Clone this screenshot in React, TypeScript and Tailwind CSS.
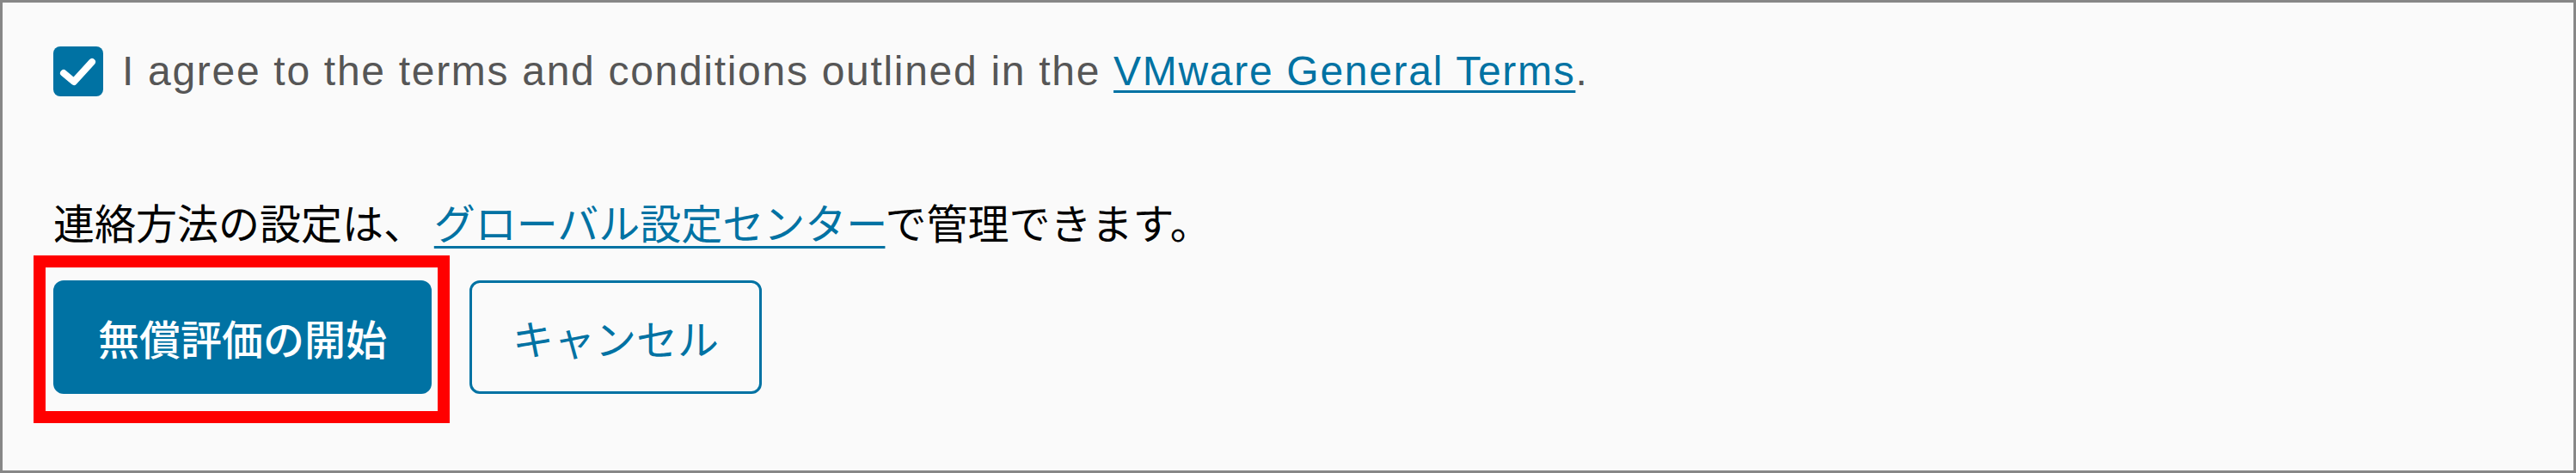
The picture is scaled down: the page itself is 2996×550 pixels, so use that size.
import React from "react";

export default function App() {
  return (
    <div className="w-[2996px] h-[550px] box-border border-[3px] border-[#878787] bg-[#fafafa] pl-[59px]">
      <div className="flex items-center gap-[22px] mt-[51px] h-[58px]">
        <div className="w-[58px] h-[58px] rounded-[8px] bg-[#0072a3] flex items-center justify-center shrink-0">
          <svg width="58" height="58" viewBox="0 0 58 58">
            <path d="M12 31 L24 41 L45 18" fill="none" stroke="#ffffff" strokeWidth="8" strokeLinecap="round" strokeLinejoin="round" />
          </svg>
        </div>
        <p className="text-[48px] leading-[58px] tracking-[1.7px] text-[#565656] font-['Liberation_Sans',sans-serif] whitespace-nowrap">
          I agree to the terms and conditions outlined in the{" "}
          <a className="text-[#0072a3] underline decoration-[3px] underline-offset-[6px]">VMware General Terms</a>.
        </p>
      </div>
      <p className="mt-[113px] h-[64px] text-[48px] leading-[64px] text-[#000000] font-['Noto_Sans_CJK_JP',sans-serif] whitespace-nowrap">
        連絡方法の設定は、{" "}
        <a className="text-[#0072a3] underline decoration-[3px] underline-offset-[8px]">グローバル設定センター</a>
        で管理できます。
      </p>
      <div className="flex gap-[44px] mt-[37px]">
        <div className="relative">
          <button className="w-[440px] h-[132px] rounded-[12px] bg-[#0072a3] text-white text-[48px] font-medium font-['Noto_Sans_CJK_JP',sans-serif] flex items-center justify-center">
            無償評価の開始
          </button>
          <div className="absolute left-[-23px] top-[-29px] w-[484px] h-[195px] border-[14px] border-[#ff0000] pointer-events-none" />
        </div>
        <button className="w-[340px] h-[132px] rounded-[12px] border-[3px] border-[#0072a3] bg-[#fafafa] text-[#0072a3] text-[48px] font-['Noto_Sans_CJK_JP',sans-serif] flex items-center justify-center">
          キャンセル
        </button>
      </div>
    </div>
  );
}
